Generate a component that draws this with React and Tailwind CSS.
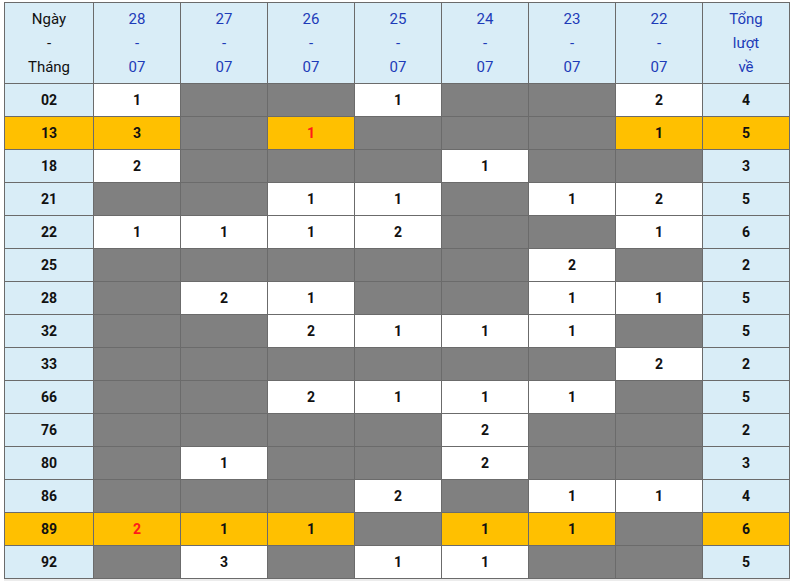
import React from "react";

const dates = ["28", "27", "26", "25", "24", "23", "22"];

// null = không về (ô xám); {v, hot} = số lần về, hot = ô vàng chữ đỏ
const rows = [
  { so: "02", cells: [1, null, null, 1, null, null, 2], total: 4 },
  { so: "13", gold: true, cells: [3, null, { v: 1, red: true }, null, null, null, 1], total: 5 },
  { so: "18", cells: [2, null, null, null, 1, null, null], total: 3 },
  { so: "21", cells: [null, null, 1, 1, null, 1, 2], total: 5 },
  { so: "22", cells: [1, 1, 1, 2, null, null, 1], total: 6 },
  { so: "25", cells: [null, null, null, null, null, 2, null], total: 2 },
  { so: "28", cells: [null, 2, 1, null, null, 1, 1], total: 5 },
  { so: "32", cells: [null, null, 2, 1, 1, 1, null], total: 5 },
  { so: "33", cells: [null, null, null, null, null, null, 2], total: 2 },
  { so: "66", cells: [null, null, 2, 1, 1, 1, null], total: 5 },
  { so: "76", cells: [null, null, null, null, 2, null, null], total: 2 },
  { so: "80", cells: [null, 1, null, null, 2, null, null], total: 3 },
  { so: "86", cells: [null, null, null, 2, null, 1, 1], total: 4 },
  { so: "89", gold: true, cells: [{ v: 2, red: true }, 1, 1, null, 1, 1, null], total: 6 },
  { so: "92", cells: [null, 3, null, 1, 1, null, null], total: 5 },
];

const Cell = ({ value, gold }) => {
  if (value === null) {
    return <td className="border border-[#6b6b6b] bg-[#808080]"></td>;
  }
  const red = typeof value === "object" && value.red;
  const v = typeof value === "object" ? value.v : value;
  return (
    <td
      className={`border border-[#6b6b6b] text-center font-bold ${
        gold ? "bg-[#ffc000]" : "bg-white"
      } ${red ? "text-[#ff1a1a]" : "text-[#111]"}`}
    >
      {v}
    </td>
  );
};

const App = () => {
  return (
    <div className="min-h-screen bg-white pl-[4px] pt-[2px] font-['Roboto','Liberation_Sans',sans-serif]">
      <table className="w-[785px] border-collapse table-fixed text-[14px] shadow-[0_2px_0_#ececec]">
        <colgroup>
          <col className="w-[89px]" />
          {dates.map((d) => (
            <col key={d} className="w-[87px]" />
          ))}
          <col className="w-[87px]" />
        </colgroup>
        <thead>
          <tr className="h-[81px] bg-[#d9edf7] text-[15px] leading-[24px]">
            <th className="border border-[#6b6b6b] font-normal text-[#111]">
              <div>Ngày</div>
              <div>-</div>
              <div>Tháng</div>
            </th>
            {dates.map((d) => (
              <th key={d} className="border border-[#6b6b6b] font-normal text-[#1d3bb8]">
                <div>{d}</div>
                <div>-</div>
                <div>07</div>
              </th>
            ))}
            <th className="border border-[#6b6b6b] font-normal text-[#1d3bb8]">
              <div>Tổng</div>
              <div>lượt</div>
              <div>về</div>
            </th>
          </tr>
        </thead>
        <tbody>
          {rows.map((r) => (
            <tr key={r.so} className="h-[33px]">
              <td
                className={`border border-[#6b6b6b] text-center font-bold text-[#111] ${
                  r.gold ? "bg-[#ffc000]" : "bg-[#d9edf7]"
                }`}
              >
                {r.so}
              </td>
              {r.cells.map((c, i) => (
                <Cell key={i} value={c} gold={r.gold} />
              ))}
              <td
                className={`border border-[#6b6b6b] text-center font-bold text-[#111] ${
                  r.gold ? "bg-[#ffc000]" : "bg-[#d9edf7]"
                }`}
              >
                {r.total}
              </td>
            </tr>
          ))}
        </tbody>
      </table>
    </div>
  );
};

export default App;
